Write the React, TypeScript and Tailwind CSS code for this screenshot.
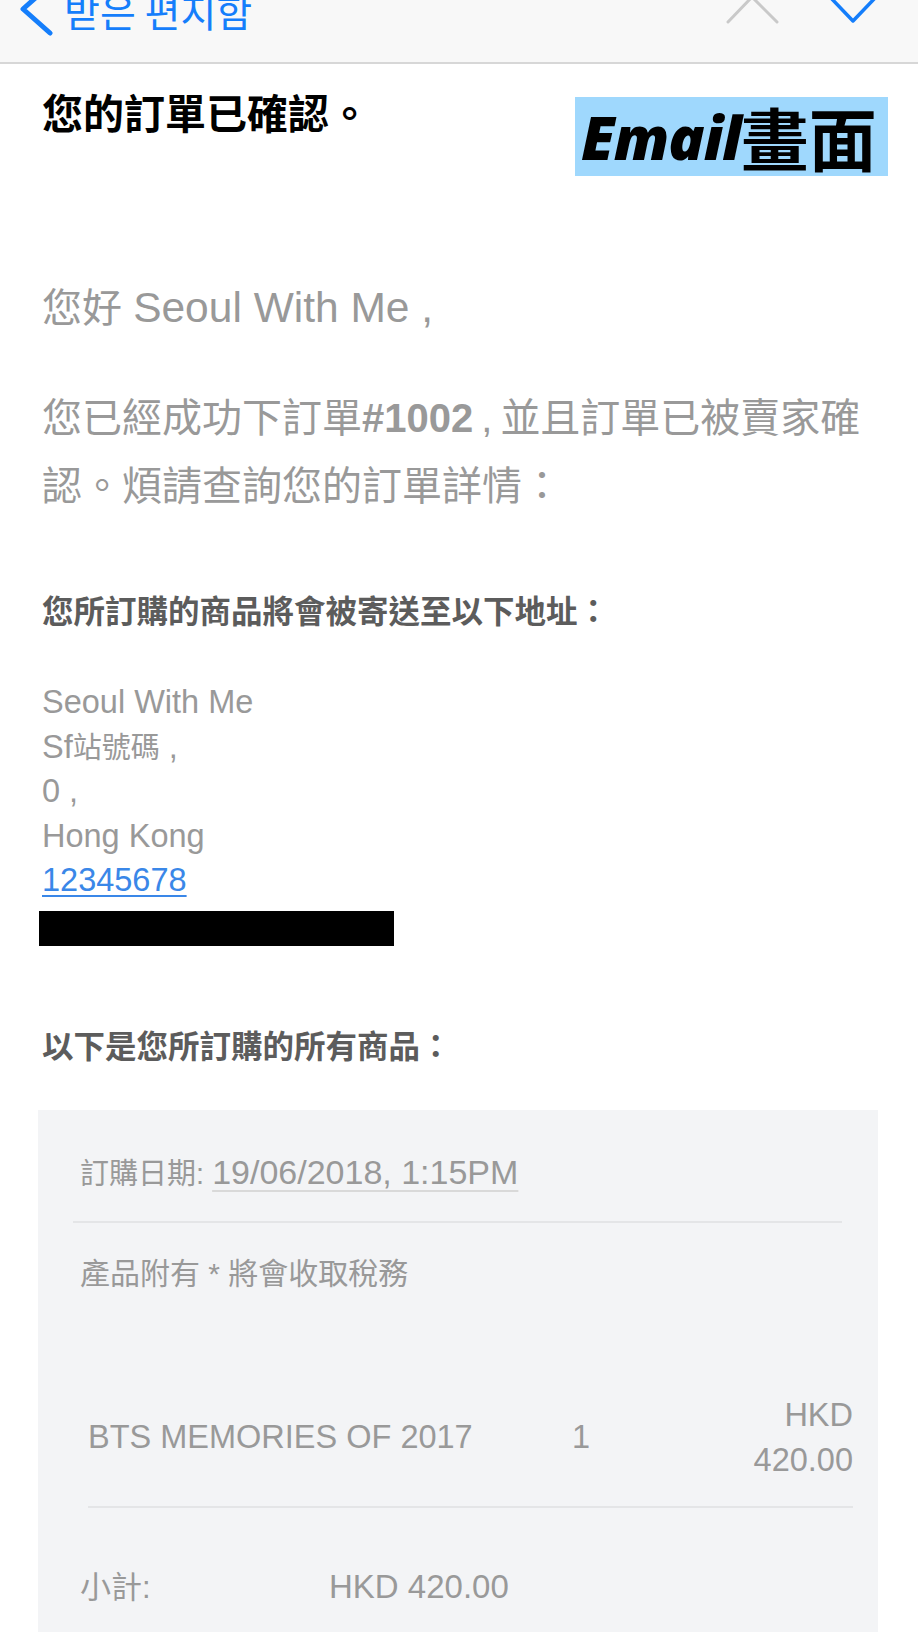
export default function App() {
  return (
    <div className="w-[918px] h-[1632px] overflow-hidden bg-white font-['Liberation_Sans','Noto_Sans_CJK_TC',sans-serif]">
      {/* top nav bar */}
      <div className="h-[64px] bg-[#f8f8f8] border-b-2 border-[#d7d7d7] flex items-start overflow-hidden">
        <svg className="ml-[19px] -mt-[19px] shrink-0" width="36" height="60" viewBox="0 0 36 60" fill="none">
          <polyline points="31,4 4,28 31,52" stroke="#157efb" strokeWidth="5" strokeLinecap="round" strokeLinejoin="round" />
        </svg>
        <span className="ml-[9px] -mt-[9px] text-[39px] leading-[38px] text-[#157efb] font-['Noto_Sans_CJK_KR',sans-serif] whitespace-nowrap">
          받은 편지함
        </span>
        <div className="flex-1" />
        <svg className="-mt-[10px] shrink-0" width="58" height="40" viewBox="0 0 58 40" fill="none">
          <polyline points="4,32 28,7 53,32" stroke="#c9c9c9" strokeWidth="3" strokeLinecap="round" strokeLinejoin="round" />
        </svg>
        <svg className="ml-[44px] mr-[36px] -mt-[10px] shrink-0" width="56" height="40" viewBox="0 0 56 40" fill="none">
          <polyline points="4,7 27,31 50,7" stroke="#157efb" strokeWidth="3.5" strokeLinecap="round" strokeLinejoin="round" />
        </svg>
      </div>

      {/* title row */}
      <div className="pt-[27px] pl-[42px] pr-[30px] flex justify-between items-start">
        <h1 className="text-[41px] leading-[48px] font-semibold text-black whitespace-nowrap">您的訂單已確認。</h1>
        <div className="mt-[6px] h-[79px] w-[313px] bg-[#9fd8fd] flex items-center pl-[6px] leading-none text-black whitespace-nowrap">
          <span className="font-['Open_Sans',sans-serif] italic font-extrabold text-[60px] tracking-[-1px]">Email</span>
          <span className="font-['Noto_Sans_CJK_TC',sans-serif] font-bold text-[68px]">畫面</span>
        </div>
      </div>

      {/* body */}
      <div className="pl-[42px] pr-[31px] text-[#999999]">
        <p className="mt-[108px] text-[40px] leading-[48px]">
          您好 <span className="text-[42.5px] leading-none">Seoul With Me ,</span>
        </p>
        <p className="mt-[52px] text-[40px] leading-[68px]">
          您已經成功下訂單<span className="font-bold">#1002</span>{"\u2009,\u2009"}並且訂單已被賣家確認。煩請查詢您的訂單詳情：
        </p>

        <h2 className="mt-[72px] text-[31.5px] leading-[40px] font-bold text-[#5c5c5c]">您所訂購的商品將會被寄送至以下地址：</h2>

        <div className="mt-[48px] text-[32.5px] leading-[44.5px]">
          <div>Seoul With Me</div>
          <div>
            Sf<span className="text-[29px] leading-none">站號碼</span> ,
          </div>
          <div>0 ,</div>
          <div>Hong Kong</div>
          <div>
            <span className="text-[#3a87e8] underline decoration-2 underline-offset-[4px]">12345678</span>
          </div>
        </div>
        <div className="mt-[8px] -ml-[3px] h-[35px] w-[355px] bg-black" />

        <h2 className="mt-[81px] text-[31.5px] leading-[40px] font-bold text-[#5c5c5c]">以下是您所訂購的所有商品：</h2>
      </div>

      {/* order box */}
      <div className="mt-[43px] ml-[38px] w-[840px] bg-[#f3f4f6] pb-[80px] text-[#999999]">
        <div className="pt-[45px] pl-[42px] text-[29px] leading-[36px] whitespace-nowrap">
          訂購日期:{" "}
          <span className="text-[34px] leading-none underline decoration-2 decoration-[#d9d9d9] underline-offset-[6px]">19/06/2018, 1:15PM</span>
        </div>
        <div className="mt-[29px] ml-[35px] mr-[36px] h-[2px] bg-[#e4e5e7]" />
        <div className="mt-[33px] pl-[42px] text-[30px] leading-[36px] whitespace-nowrap">產品附有 * 將會收取稅務</div>

        <div className="mt-[101px] ml-[50px] mr-[25px]">
          <div className="flex items-center text-[32.5px] leading-[45px]">
            <div className="w-[484px] whitespace-nowrap">BTS MEMORIES OF 2017</div>
            <div className="flex-1">1</div>
            <div className="flex flex-col items-end">
              <span>HKD</span>
              <span>420.00</span>
            </div>
          </div>
          <div className="mt-[23px] h-[2px] bg-[#e4e5e7]" />
        </div>

        <div className="mt-[59px] pl-[42px] flex items-baseline text-[33px] leading-[40px] whitespace-nowrap">
          <div className="w-[249px] text-[31px]">小計:</div>
          <div>HKD 420.00</div>
        </div>
      </div>
    </div>
  );
}
